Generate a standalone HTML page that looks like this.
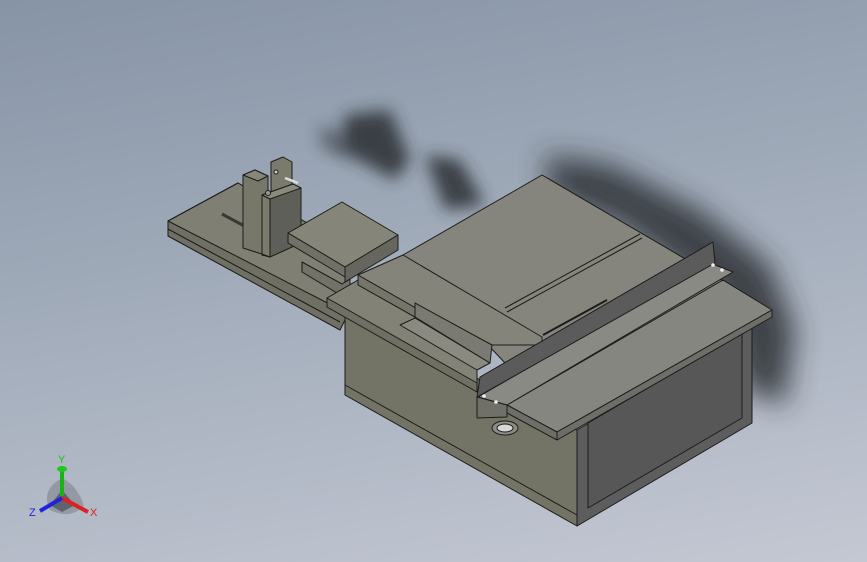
<!DOCTYPE html>
<html><head><style>
html,body{margin:0;padding:0;}
body{width:867px;height:562px;overflow:hidden;background:linear-gradient(170deg,#8794a6 0%,#9ea9b8 40%,#c4c8d3 100%);}
svg{position:absolute;left:0;top:0;}
</style></head><body>
<svg width="867" height="562" viewBox="0 0 867 562">
<defs>
<filter id="b" x="-50%" y="-50%" width="200%" height="200%"><feGaussianBlur stdDeviation="14"/></filter>
<filter id="b2" x="-50%" y="-50%" width="200%" height="200%"><feGaussianBlur stdDeviation="8"/></filter>
</defs>
<g fill="#2a2d33" opacity="0.85">
<path filter="url(#b2)" d="M345 115 L390 110 L410 160 L395 180 L340 150 Z"/>
<path filter="url(#b2)" d="M318 125 L345 135 L350 158 L322 148 Z" opacity="0.6"/>
<path filter="url(#b2)" d="M425 155 L460 160 L485 205 L445 210 Z"/>
<path filter="url(#b)" d="M545 155 L610 165 L700 210 L770 265 L795 330 L785 405 L745 390 L720 300 L620 225 L550 195 Z"/>
</g>
<g stroke="#1c1c1a" stroke-width="1" stroke-linejoin="round">
<!-- left plate -->
<path d="M168 221 L238 183 L345 245 L345 320 L340 330 L168 236 Z" fill="#6f6f64"/>
<path d="M168 221 L238 183 L345 245 L345 312 Z" fill="#7f7f73"/>
<path d="M168 229 L340 322" fill="none"/>
<path d="M222 214 L248 228" stroke-width="3" stroke="#3a3a35"/>
<!-- blocks -->
<path d="M243 175 L255 170 L268 176 L268 256 L243 248 Z" fill="#78786a"/>
<path d="M243 175 L255 170 L268 176 L258 181 Z" fill="#86867a"/>
<path d="M271 162 L283 157 L292 162 L292 196 L271 200 Z" fill="#7a7a6d"/>
<path d="M262 195 L293 184 L301 188 L301 243 L270 257 L262 255 Z" fill="#5f5f5a"/>
<path d="M262 195 L270 199 L270 257 L262 254 Z" fill="#7b7b6c"/>
<path d="M262 195 L293 184 L301 188 L270 199 Z" fill="#8a8a7d"/>
<circle cx="268" cy="193" r="2.5" fill="#999"/><circle cx="276" cy="172" r="2" fill="#ccc"/>
<path d="M285 178 L298 183" stroke="#ddd" stroke-width="2.5"/>
<!-- clamp -->
<path d="M302 262 L342 284 L350 279 L350 290 L342 296 L302 272 Z" fill="#727268"/>
<path d="M288 233 L342 202 L398 235 L345 267 Z" fill="#85857a"/>
<path d="M288 233 L345 267 L345 277 L288 243 Z" fill="#707066"/>
<path d="M345 267 L398 235 L398 250 L345 282 Z" fill="#66665e"/>
<!-- box -->
<path d="M345 310 L345 395 L577 526 L577 430 Z" fill="#747466"/>
<path d="M345 385 L577 515" fill="none"/>
<path d="M577 430 L752 328 L752 423 L577 526 Z" fill="#5d5d5d"/>
<path d="M588 423 L742 333 L742 418 L588 508 Z" fill="#575757"/>
<!-- main top -->
<path d="M403 255 L542 175 L735 288 L540 400 Z" fill="#85857d"/>
<path d="M505 308 L640 234 M507 312 L642 238" fill="none"/>
<path d="M543 335 L607 300" stroke-width="2"/>
<!-- front raised block -->
<path d="M358 275 L403 255 L542 337 L542 345 L492 345 L358 285 Z" fill="#84847b"/>
<path d="M358 275 L358 285 L477 352 L477 343 Z" fill="#75756a"/>
<!-- ledge -->
<path d="M327 298 L358 280 L358 285 L477 352 L477 390 L327 305 Z" fill="#828277"/>
<path d="M327 298 L477 383 L477 392 L327 307 Z" fill="#6f6f64"/>
<!-- riving knife -->
<path d="M400 325 L415 318 L490 363 L477 370 Z" fill="#8a8a80"/>
<path d="M415 303 L492 345 L490 363 L415 317 Z" fill="#7a7a72"/>
<!-- right wing -->
<path d="M507 405 L723 280 L772 310 L557 432 Z" fill="#868680"/>
<path d="M557 432 L772 310 L772 317 L557 440 Z" fill="#6e6e68"/>
<path d="M557 432 L557 440 L507 413 L507 405 Z" fill="#6e6e68"/>
<!-- fence -->
<path d="M478 397 L710 263 L733 272 L507 405 Z" fill="#8a8a85"/>
<path d="M480 377 L713 242 L715 263 L477 397 Z" fill="#5b5b5b"/>
<path d="M477 397 L507 405 L507 417 L477 418 Z" fill="#707068"/>
<!-- knob -->
<ellipse cx="505" cy="428" rx="13" ry="7" fill="#8c8c88"/>
<ellipse cx="505" cy="428" rx="8" ry="4" fill="#d8d8d8"/>
</g>
<g fill="#eee"><circle cx="484" cy="396" r="1.8"/><circle cx="496" cy="402" r="1.8"/><circle cx="713" cy="265" r="1.8"/><circle cx="722" cy="270" r="1.8"/></g>
<!-- triad -->
<path d="M62 478 Q78 486 84 506 Q70 520 50 510 Q40 490 62 478 Z" fill="#6e737a" opacity="0.45"/>
<path d="M62 490 L75 505 L62 512 L50 505 Z" fill="#3c4046" opacity="0.6"/>
<line x1="62" y1="496" x2="62" y2="470" stroke="#19b219" stroke-width="4"/>
<ellipse cx="62" cy="469" rx="5" ry="3" fill="#22c422"/>
<line x1="62" y1="498" x2="88" y2="512" stroke="#dd2020" stroke-width="4"/>
<line x1="62" y1="498" x2="40" y2="511" stroke="#2222dd" stroke-width="4"/>
<text x="58" y="463" font-family="Liberation Sans, sans-serif" font-size="11" fill="#20c020">Y</text>
<text x="90" y="516" font-family="Liberation Sans, sans-serif" font-size="11" fill="#e02020">X</text>
<text x="29" y="516" font-family="Liberation Sans, sans-serif" font-size="11" fill="#2020e0">Z</text>
</svg>
</body></html>
